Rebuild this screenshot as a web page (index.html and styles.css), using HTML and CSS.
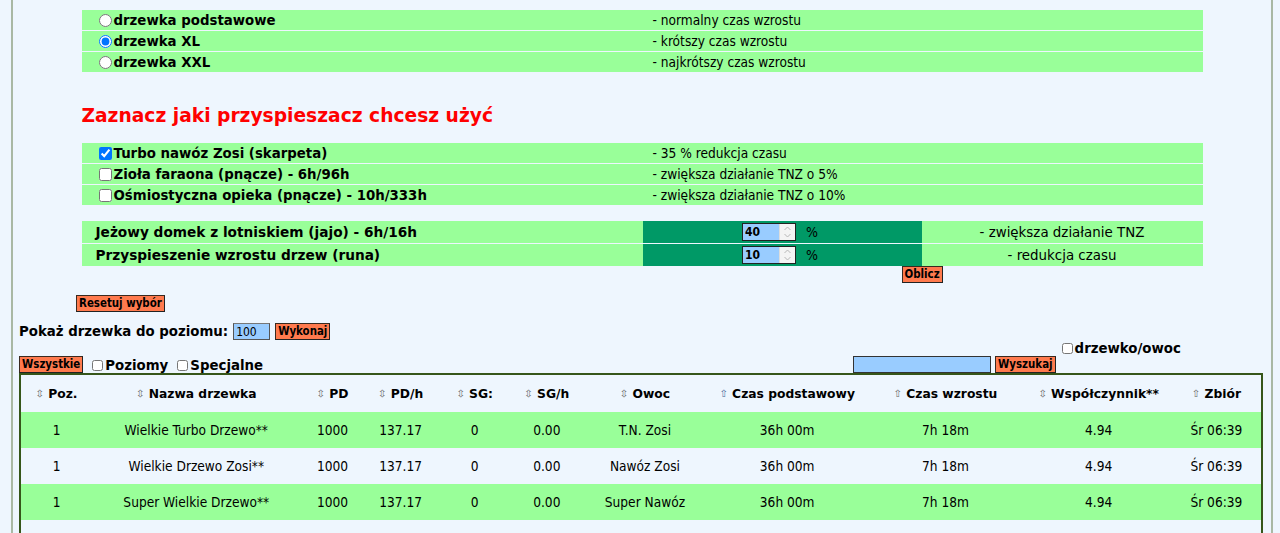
FILE: index.html
```html
<!DOCTYPE html>
<html lang="pl">
<head>
<meta charset="utf-8">
<title>Drzewka</title>
<link rel="stylesheet" href="styles.css">
</head>
<body>
<div class="page">
  <div class="opts">
    <div class="row"><label class="lbl"><input type="radio" name="typ">drzewka podstawowe</label><span class="desc">- normalny czas wzrostu</span></div>
    <div class="row"><label class="lbl"><input type="radio" name="typ" checked>drzewka XL</label><span class="desc">- krótszy czas wzrostu</span></div>
    <div class="row"><label class="lbl"><input type="radio" name="typ">drzewka XXL</label><span class="desc">- najkrótszy czas wzrostu</span></div>
  </div>

  <h2 class="title">Zaznacz jaki przyspieszacz chcesz użyć</h2>

  <div class="opts">
    <div class="row"><label class="lbl"><input type="checkbox" checked>Turbo nawóz Zosi (skarpeta)</label><span class="desc">- 35 % redukcja czasu</span></div>
    <div class="row"><label class="lbl"><input type="checkbox">Zioła faraona (pnącze) - 6h/96h</label><span class="desc">- zwiększa działanie TNZ o 5%</span></div>
    <div class="row"><label class="lbl"><input type="checkbox">Ośmiostyczna opieka (pnącze) - 10h/333h</label><span class="desc">- zwiększa działanie TNZ o 10%</span></div>
  </div>

  <div class="opts boosts">
    <div class="brow">
      <span class="blbl">Jeżowy domek z lotniskiem (jajo) - 6h/16h</span>
      <span class="bval"><span class="num"><input class="numin" type="text" value="40"><span class="spin"><svg width="9" height="16" viewBox="0 0 9 16"><path d="M1.5 6 L4.5 3 L7.5 6" fill="none" stroke="#b8b8b8" stroke-width="1"/><path d="M1.5 10 L4.5 13 L7.5 10" fill="none" stroke="#b8b8b8" stroke-width="1"/></svg></span></span><span class="pct">%</span></span>
      <span class="bdesc">- zwiększa działanie TNZ</span>
    </div>
    <div class="brow">
      <span class="blbl">Przyspieszenie wzrostu drzew (runa)</span>
      <span class="bval"><span class="num"><input class="numin" type="text" value="10"><span class="spin"><svg width="9" height="16" viewBox="0 0 9 16"><path d="M1.5 6 L4.5 3 L7.5 6" fill="none" stroke="#b8b8b8" stroke-width="1"/><path d="M1.5 10 L4.5 13 L7.5 10" fill="none" stroke="#b8b8b8" stroke-width="1"/></svg></span></span><span class="pct">%</span></span>
      <span class="bdesc">- redukcja czasu</span>
    </div>
  </div>
  <div class="calc"><button class="btn">Oblicz</button></div>

  <div class="reset"><button class="btn">Resetuj wybór</button></div>

  <div class="level">
    <span class="lvl-label">Pokaż drzewka do poziomu:</span>
    <input class="lvl-in" type="text" value="100">
    <button class="btn">Wykonaj</button>
  </div>

  <div class="filters">
    <div class="fleft">
      <button class="btn">Wszystkie</button>
      <label class="flbl"><input type="checkbox">Poziomy</label>
      <label class="flbl"><input type="checkbox">Specjalne</label>
    </div>
    <div class="fright">
      <input class="search" type="text">
      <button class="btn">Wyszukaj</button>
      <label class="flbl top"><input type="checkbox">drzewko/owoc</label>
    </div>
  </div>

  <table class="trees">
    <colgroup>
      <col class="c1"><col class="c2"><col class="c3"><col class="c4"><col class="c5"><col class="c6"><col class="c7"><col class="c8"><col class="c9"><col class="c10"><col class="c11">
    </colgroup>
    <thead>
      <tr>
        <th><span class="si">⇳</span> Poz.</th>
        <th><span class="si">⇳</span> Nazwa drzewka</th>
        <th><span class="si">⇳</span> PD</th>
        <th><span class="si">⇳</span> PD/h</th>
        <th><span class="si">⇳</span> SG:</th>
        <th><span class="si">⇳</span> SG/h</th>
        <th><span class="si">⇳</span> Owoc</th>
        <th><span class="si up act">⇧</span> Czas podstawowy</th>
        <th><span class="si up">⇧</span> Czas wzrostu</th>
        <th><span class="si">⇳</span> Współczynnik**</th>
        <th><span class="si up">⇧</span> Zbiór</th>
      </tr>
    </thead>
    <tbody>
      <tr class="g"><td>1</td><td>Wielkie Turbo Drzewo**</td><td>1000</td><td>137.17</td><td>0</td><td>0.00</td><td>T.N. Zosi</td><td>36h 00m</td><td>7h 18m</td><td>4.94</td><td>Śr 06:39</td></tr>
      <tr class="b"><td>1</td><td>Wielkie Drzewo Zosi**</td><td>1000</td><td>137.17</td><td>0</td><td>0.00</td><td>Nawóz Zosi</td><td>36h 00m</td><td>7h 18m</td><td>4.94</td><td>Śr 06:39</td></tr>
      <tr class="g"><td>1</td><td>Super Wielkie Drzewo**</td><td>1000</td><td>137.17</td><td>0</td><td>0.00</td><td>Super Nawóz</td><td>36h 00m</td><td>7h 18m</td><td>4.94</td><td>Śr 06:39</td></tr>
      <tr class="b"><td></td><td></td><td></td><td></td><td></td><td></td><td></td><td></td><td></td><td></td><td></td></tr>
    </tbody>
  </table>
</div>
</body>
</html>
```

FILE: styles.css
```css
html, body {
  margin: 0;
  padding: 0;
  background: #eef6fe;
  overflow: hidden;
}
body {
  font-family: Tahoma, "DejaVu Sans Condensed", "Liberation Sans", sans-serif;
  font-size: 13.33px;
  color: #000;
}
.page {
  margin-left: 11px;
  width: 1258px;
  border-left: 2px solid #a9b8a4;
  border-right: 2px solid #a9b8a4;
  padding-top: 10px;
  min-height: 600px;
}
.opts {
  width: 1121px;
  margin: 0 auto;
  display: grid;
  row-gap: 1px;
}
.row {
  display: grid;
  grid-template-columns: 561px 560px;
  height: 20px;
  align-items: center;
  background: #99ff99;
}
.lbl {
  display: flex;
  align-items: center;
  padding-left: 14px;
  font-family: Verdana, "DejaVu Sans", sans-serif;
  font-weight: bold;
  font-size: 13.33px;
}
.lbl input {
  margin: 0 2px 0 3px;
  width: 13px;
  height: 13px;
}
.desc {
  padding-left: 10px;
  font-size: 13.6px;
}
.title {
  width: 1121px;
  margin: 32px auto 15px;
  font-family: Verdana, "DejaVu Sans", sans-serif;
  font-size: 18.67px;
  line-height: 24px;
  font-weight: bold;
  color: #ff0000;
}
.boosts {
  margin-top: 16px;
}
.brow {
  display: grid;
  grid-template-columns: 561px 279px 281px;
  height: 22px;
  align-items: stretch;
  background: #99ff99;
}
.blbl {
  display: flex;
  align-items: center;
  padding-left: 14px;
  font-family: Verdana, "DejaVu Sans", sans-serif;
  font-weight: bold;
  font-size: 13.7px;
}
.bval {
  background: #009966;
  display: flex;
  align-items: center;
  justify-content: center;
  gap: 10px;
  padding-right: 4px;
}
.num {
  display: flex;
  width: 52px;
  height: 16px;
  border: 1px solid #222;
  background: #99ccff;
}
.numin {
  width: 36px;
  height: 16px;
  border: 0;
  padding: 0 0 0 2px;
  margin: 0;
  background: #99ccff;
  font-family: Tahoma, "DejaVu Sans Condensed", "Liberation Sans", sans-serif;
  font-weight: bold;
  font-size: 12px;
  color: #000;
  box-sizing: border-box;
}
.spin {
  flex: 1;
  background: #f4f4f4;
  border-left: 1px solid #ddd;
  display: flex;
  align-items: center;
  justify-content: center;
}
.pct {
  font-size: 14px;
}
.bdesc {
  display: flex;
  align-items: center;
  justify-content: center;
  font-size: 14.9px;
}
.calc {
  width: 1121px;
  margin: 0 auto;
  display: flex;
  padding-left: 820px;
  box-sizing: border-box;
}
.btn {
  background: #ff7a4e;
  border: 1px solid #3a2a20;
  border-right-color: #222;
  border-bottom-color: #222;
  font-family: Tahoma, "DejaVu Sans Condensed", "Liberation Sans", sans-serif;
  font-weight: bold;
  font-size: 11.4px;
  color: #000;
  padding: 0 2px;
  height: 17px;
  line-height: 15px;
  margin: 0;
  border-radius: 0;
}
.reset {
  margin-top: 12px;
  padding-left: 63px;
  display: flex;
}
.level {
  margin-top: 11px;
  padding-left: 6px;
  display: flex;
  align-items: center;
  gap: 5px;
  height: 17px;
}
.lvl-label {
  font-family: Verdana, "DejaVu Sans", sans-serif;
  font-weight: bold;
  font-size: 13.33px;
}
.lvl-in {
  width: 37px;
  height: 17px;
  box-sizing: border-box;
  border: 1px solid #555;
  border-top-color: #777;
  background: #99ccff;
  font-family: Tahoma, "DejaVu Sans Condensed", "Liberation Sans", sans-serif;
  font-size: 12px;
  padding: 0 2px;
  margin: 0;
}
.filters {
  margin-top: 2px;
  padding-left: 6px;
  display: flex;
  align-items: flex-end;
  height: 31px;
}
.fleft {
  width: 834px;
  display: flex;
  align-items: flex-end;
  gap: 9px;
}
.fright {
  display: flex;
  align-items: flex-end;
  height: 31px;
}
.flbl {
  display: flex;
  align-items: center;
  font-family: Verdana, "DejaVu Sans", sans-serif;
  font-weight: bold;
  font-size: 13.33px;
  height: 16px;
}
.flbl input {
  margin: 0 2px 0 0;
  width: 11px;
  height: 11px;
}
.flbl.top {
  align-self: flex-start;
  margin-left: 6px;
  margin-top: -2px;
}
.search {
  width: 138px;
  height: 17px;
  box-sizing: border-box;
  border: 1px solid #333;
  background: #99ccff;
  margin: 0 4px 0 0;
  padding: 0;
}
.trees {
  margin: 0 8px 0 6px;
  width: 1244px;
  border: 2px solid #36561a;
  border-collapse: collapse;
  table-layout: fixed;
}
.c1 { width: 72px; }
.c2 { width: 208px; }
.c3 { width: 64px; }
.c4 { width: 72px; }
.c5 { width: 76px; }
.c6 { width: 68px; }
.c7 { width: 128px; }
.c8 { width: 156px; }
.c9 { width: 160px; }
.c10 { width: 146px; }
.c11 { width: 90px; }
.trees th {
  height: 37px;
  padding: 0;
  font-family: Verdana, "DejaVu Sans", sans-serif;
  font-weight: bold;
  font-size: 12.3px;
  text-align: center;
  background: #eef6fe;
  white-space: nowrap;
}
.si {
  font-family: "DejaVu Sans", sans-serif;
  font-weight: normal;
  font-size: 10px;
  color: #666;
  vertical-align: 1px;
}
.si.act {
  color: #4a6a98;
}
.trees td {
  height: 36px;
  padding: 0;
  text-align: center;
  font-size: 13.6px;
  white-space: nowrap;
}
.trees tr.g td {
  background: #99ff99;
}
.trees tr.b td {
  background: #eef6fe;
}
```
